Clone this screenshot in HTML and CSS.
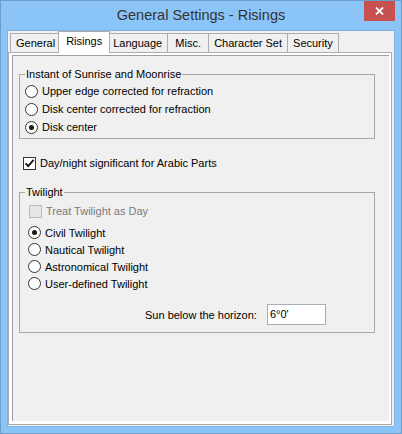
FILE: index.html
```html
<!DOCTYPE html>
<html>
<head>
<meta charset="utf-8">
<title>General Settings - Risings</title>
<link rel="stylesheet" href="styles.css">
</head>
<body>
<div class="window">
  <div class="titlebar">
    <span></span>
    <div class="title">General Settings - Risings</div>
    <div class="close">
      <svg width="9" height="8" viewBox="0 0 9 8"><path d="M1 0.5 L8 7.5 M8 0.5 L1 7.5" stroke="#fff" stroke-width="1.8" fill="none"/></svg>
    </div>
  </div>
  <div class="client">
    <div class="tabs">
      <div class="tab">General</div>
      <div class="tab active">Risings</div>
      <div class="tab">Language</div>
      <div class="tab">Misc.</div>
      <div class="tab">Character Set</div>
      <div class="tab">Security</div>
    </div>
    <div class="panel">
      <div class="page">
        <fieldset class="group group-instant">
          <legend>Instant of Sunrise and Moonrise</legend>
          <div class="opt"><span class="radio"></span>Upper edge corrected for refraction</div>
          <div class="opt"><span class="radio"></span>Disk center corrected for refraction</div>
          <div class="opt"><span class="radio on"></span>Disk center</div>
        </fieldset>
        <div class="opt daynight"><span class="check"><svg width="11" height="11" viewBox="0 0 11 11"><path d="M1.6 5.4 L4.2 8.2 L9.6 1.8" stroke="#111" stroke-width="1.8" fill="none"/></svg></span>Day/night significant for Arabic Parts</div>
        <fieldset class="group group-twilight">
          <legend>Twilight</legend>
          <div class="opt disabled"><span class="check off"></span>Treat Twilight as Day</div>
          <div class="opt tw first"><span class="radio on"></span>Civil Twilight</div>
          <div class="opt tw"><span class="radio"></span>Nautical Twilight</div>
          <div class="opt tw"><span class="radio"></span>Astronomical Twilight</div>
          <div class="opt tw"><span class="radio"></span>User-defined Twilight</div>
          <div class="sun-row">
            <span>Sun below the horizon:</span>
            <div class="field">6°0'</div>
          </div>
        </fieldset>
      </div>
    </div>
  </div>
</div>
</body>
</html>
```
FILE: styles.css
```css
html, body {
  margin: 0;
  padding: 0;
}

.window {
  width: 402px;
  height: 434px;
  box-sizing: border-box;
  border: 1px solid #6b9dcd;
  background: #8bc5f8;
  display: flex;
  flex-direction: column;
  padding: 0 7px 7px;
  font-family: "Liberation Sans", Arial, sans-serif;
  font-size: 11px;
  color: #000;
}

.titlebar {
  height: 30px;
  margin: 0 -7px;
  display: grid;
  grid-template-columns: 1fr auto 1fr;
}

.title {
  font-size: 14.5px;
  color: #333;
  line-height: 29px;
  white-space: nowrap;
}

.close {
  justify-self: end;
  align-self: start;
  width: 31px;
  height: 20px;
  margin-right: 6px;
  background: #c75050;
  display: flex;
  align-items: center;
  justify-content: center;
}

.close svg {
  display: block;
}

.client {
  flex: 1;
  background: #f0f0f0;
  display: flex;
  flex-direction: column;
  padding: 0 2px 1px 0;
  box-shadow: 0 0 0 1px #7db3e6;
}

.tabs {
  display: flex;
  align-items: flex-end;
  height: 21px;
  padding-left: 2px;
}

.tab {
  box-sizing: border-box;
  height: 19px;
  min-width: 42px;
  padding: 0 5px;
  border: 1px solid #acacac;
  border-bottom: none;
  background: #f0f0f0;
  margin-left: -1px;
  text-align: center;
  line-height: 18px;
  white-space: nowrap;
}

.tab:first-child {
  margin-left: 0;
}

.tab.active {
  height: 22px;
  background: #fff;
  padding: 0 7px 3px;
  margin: 0 -2px -1px -3px;
  position: relative;
  z-index: 1;
}

.panel {
  flex: 1;
  border: 1px solid #acacac;
  background: #fff;
  padding: 2px 2px 3px 3px;
  display: flex;
}

.page {
  flex: 1;
  border-top: 1px solid #a0a0a0;
  border-left: 1px solid #a0a0a0;
  background: #f0f0f0;
}

.group {
  margin: 12px 14px 0 6px;
  padding: 1px 5px 2px;
  border: 1px solid #a8a8a8;
  min-width: 0;
}

.group legend {
  padding: 0 1px;
  line-height: 13px;
}

.opt {
  display: flex;
  align-items: center;
  gap: 4px;
  height: 18px;
  white-space: nowrap;
}

.radio {
  width: 13px;
  height: 13px;
  box-sizing: border-box;
  border: 1px solid #333;
  border-radius: 50%;
  background: #fff;
  display: flex;
  align-items: center;
  justify-content: center;
  flex: none;
}

.radio.on::after {
  content: "";
  width: 5px;
  height: 5px;
  border-radius: 50%;
  background: #1a1a1a;
}

.check {
  width: 13px;
  height: 13px;
  box-sizing: border-box;
  border: 1px solid #333;
  background: #fff;
  flex: none;
  display: flex;
  align-items: center;
  justify-content: center;
}

.check svg {
  display: block;
}

.check.off {
  border-color: #bcbcbc;
  background: #e6e6e6;
}

.daynight {
  margin: 15px 0 0 10px;
}

.group-twilight {
  margin-top: 14px;
  padding: 3px 5px 7px;
}

.disabled {
  margin-left: 4px;
  color: #7a7a7a;
}

.tw {
  height: 17px;
  margin-left: 3px;
}

.tw.first {
  margin-top: 4px;
}

.sun-row {
  margin-top: 12px;
  padding-left: 120px;
  display: flex;
  align-items: center;
  gap: 10px;
  white-space: nowrap;
}

.field {
  width: 59px;
  height: 21px;
  box-sizing: border-box;
  border: 1px solid #abadb3;
  background: #fff;
  padding-left: 2px;
  line-height: 19px;
}
```
